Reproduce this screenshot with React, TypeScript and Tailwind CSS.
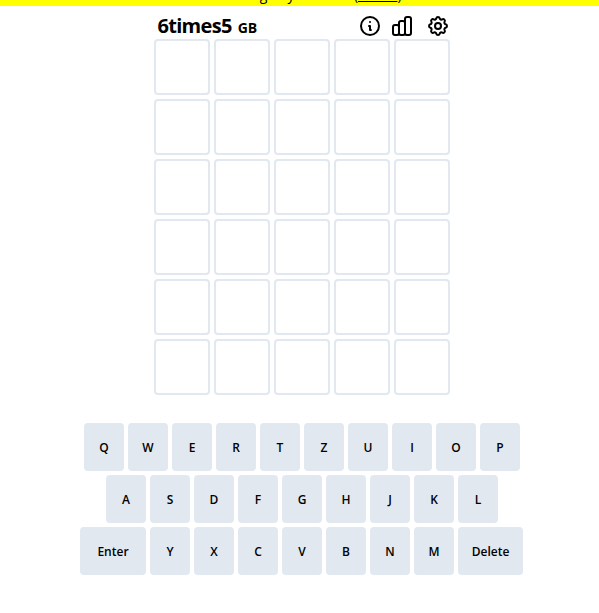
import React from "react";

const font = { fontFamily: '"Open Sans", "Noto Sans", sans-serif' };

function Key({ label, wide }: { label: string; wide?: string }) {
  return (
    <button className={`h-12 ${wide ?? "w-10"} rounded-[4px] bg-[#e2e8f0] text-[12px] font-semibold text-black flex items-center justify-center pt-[2px]`}>
      {label}
    </button>
  );
}

export default function App() {
  const rows = [
    "QWERTZUIOP".split(""),
    "ASDFGHJKL".split(""),
    "YXCVBNM".split(""),
  ];
  return (
    <div className="min-h-[613px] bg-white flex flex-col" style={font}>
      <div className="w-full h-[6px] bg-[#ffff00] overflow-hidden flex justify-center">
        <div className="-mt-[15px] text-[14px] leading-[20px] text-black whitespace-nowrap pl-[6px]">
          Have a big day to win it (<span className="underline">About</span>).
        </div>
      </div>

      <div className="flex flex-col items-center pl-[5px]">
        <div className="w-[295px] h-[33px] flex items-center justify-between pl-[3px] pt-[7px]">
          <div className="mt-[2px] font-bold text-[20px] leading-[26px] text-black flex items-baseline gap-[6px] tracking-[-0.7px]">
            <span>6times5</span>
            <span className="text-[14px] tracking-normal">GB</span>
          </div>
          <div className="flex items-center -mt-[1px]">
            <svg className="w-6 h-6" fill="none" viewBox="0 0 24 24" stroke="black" strokeWidth="2" strokeLinecap="round" strokeLinejoin="round">
              <path d="M13 16h-1v-4h-1m1-4h.01M21 12a9 9 0 11-18 0 9 9 0 0118 0z" />
            </svg>
            <svg className="w-6 h-6 ml-2" fill="none" viewBox="0 0 24 24" stroke="black" strokeWidth="2" strokeLinecap="round" strokeLinejoin="round">
              <path d="M9 19v-6a2 2 0 00-2-2H5a2 2 0 00-2 2v6a2 2 0 002 2h2a2 2 0 002-2zm0 0V9a2 2 0 012-2h2a2 2 0 012 2v10m-6 0a2 2 0 002 2h2a2 2 0 002-2m0 0V5a2 2 0 012-2h2a2 2 0 012 2v14a2 2 0 01-2 2h-2a2 2 0 01-2-2z" />
            </svg>
            <svg className="w-6 h-6 ml-3" fill="none" viewBox="0 0 24 24" stroke="black" strokeWidth="2" strokeLinecap="round" strokeLinejoin="round">
              <path d="M10.325 4.317c.426-1.756 2.924-1.756 3.35 0a1.724 1.724 0 002.573 1.066c1.543-.94 3.31.826 2.37 2.37a1.724 1.724 0 001.065 2.572c1.756.426 1.756 2.924 0 3.35a1.724 1.724 0 00-1.066 2.573c.94 1.543-.826 3.31-2.37 2.37a1.724 1.724 0 00-2.572 1.065c-.426 1.756-2.924 1.756-3.35 0a1.724 1.724 0 00-2.573-1.066c-1.543.94-3.31-.826-2.37-2.37a1.724 1.724 0 00-1.065-2.572c-1.756-.426-1.756-2.924 0-3.35a1.724 1.724 0 001.066-2.573c-.94-1.543.826-3.31 2.37-2.37.996.608 2.296.07 2.572-1.065z" />
              <path d="M15 12a3 3 0 11-6 0 3 3 0 016 0z" />
            </svg>
          </div>
        </div>

        <div className="grid grid-cols-[repeat(5,56px)] auto-rows-[56px] gap-1">
          {Array.from({ length: 30 }).map((_, i) => (
            <div key={i} className="border-2 border-[#e2e8f0] rounded-[4px] bg-white" />
          ))}
        </div>

        <div className="mt-7 flex flex-col gap-1 items-center">
          <div className="flex gap-1">{rows[0].map((k) => <Key key={k} label={k} />)}</div>
          <div className="flex gap-1">{rows[1].map((k) => <Key key={k} label={k} />)}</div>
          <div className="flex gap-1 -ml-px">
            <Key label="Enter" wide="w-[66px]" />
            {rows[2].map((k) => <Key key={k} label={k} />)}
            <Key label="Delete" wide="w-[65px]" />
          </div>
        </div>
      </div>
    </div>
  );
}
